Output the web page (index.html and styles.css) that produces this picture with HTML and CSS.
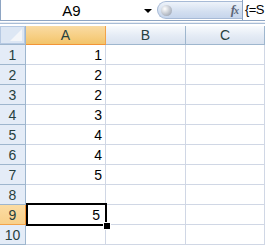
FILE: index.html
```html
<!DOCTYPE html>
<html lang="en">
<head>
    <meta charset="UTF-8">
    <title>Sheet</title>
    <link rel="stylesheet" href="styles.css">
</head>
<body>
    <div class="formula-bar">
        <div class="name-box">
            <span class="name">A9</span>
            <span class="drop"></span>
        </div>
        <div class="pill">
            <span class="knob"></span>
            <span class="fx">f<i>x</i></span>
        </div>
        <div class="formula">{=S</div>
    </div>
    <div class="bar-gap"></div>

    <div class="sheet">
        <div class="corner"><span class="tri"></span></div>
        <div class="col-head active">A</div>
        <div class="col-head">B</div>
        <div class="col-head">C</div>

        <div class="row-head">1</div><div class="cell">1</div><div class="cell"></div><div class="cell"></div>
        <div class="row-head">2</div><div class="cell">2</div><div class="cell"></div><div class="cell"></div>
        <div class="row-head">3</div><div class="cell">2</div><div class="cell"></div><div class="cell"></div>
        <div class="row-head">4</div><div class="cell">3</div><div class="cell"></div><div class="cell"></div>
        <div class="row-head">5</div><div class="cell">4</div><div class="cell"></div><div class="cell"></div>
        <div class="row-head">6</div><div class="cell">4</div><div class="cell"></div><div class="cell"></div>
        <div class="row-head">7</div><div class="cell">5</div><div class="cell"></div><div class="cell"></div>
        <div class="row-head">8</div><div class="cell"></div><div class="cell"></div><div class="cell"></div>
        <div class="row-head active">9</div><div class="cell selected">5<span class="sel"><span class="handle"></span></span></div><div class="cell"></div><div class="cell"></div>
        <div class="row-head">10</div><div class="cell"></div><div class="cell"></div><div class="cell"></div>
    </div>
</body>
</html>
```

FILE: styles.css
```css
body, html {
    margin: 0;
    padding: 0;
    background: #ffffff;
    font-family: "Liberation Sans", Arial, sans-serif;
    font-size: 14px;
    overflow: hidden;
}

/* formula bar */
.formula-bar {
    display: flex;
    height: 20px;
    border-bottom: 1px solid #8ea5c3;
    background: #ffffff;
}

.name-box {
    width: 157px;
    box-sizing: border-box;
    border-left: 1px solid #8ea5c3;
    display: flex;
    align-items: center;
    position: relative;
}

.name {
    flex: 1;
    text-align: center;
    color: #000;
    padding-right: 2px;
    padding-top: 1px;
    font-size: 15px;
}

.drop {
    width: 0;
    height: 0;
    border-left: 4px solid transparent;
    border-right: 4px solid transparent;
    border-top: 4px solid #000;
    margin-right: 5px;
    margin-top: 1px;
}

.pill {
    width: 85px;
    margin-top: 1px;
    height: 18px;
    box-sizing: border-box;
    border: 1px solid #a7bad6;
    border-right: none;
    border-radius: 9px 0 0 9px;
    background: linear-gradient(#eef3fa, #d3dff0 60%, #c6d5ec);
    display: flex;
    align-items: center;
    justify-content: space-between;
}

.knob {
    width: 11px;
    height: 11px;
    margin-left: 3px;
    border-radius: 50%;
    background: radial-gradient(circle at 35% 35%, #ffffff, #b8bec8 60%, #8e96a4);
}

.fx {
    font-family: "Liberation Serif", "Times New Roman", serif;
    font-style: italic;
    font-weight: bold;
    color: #5c6678;
    font-size: 13px;
    margin-right: 4px;
    letter-spacing: -1px;
}

.fx i {
    font-size: 10px;
}

.formula {
    flex: 1;
    border-left: 1px solid #8ea5c3;
    padding-left: 2px;
    padding-top: 2px;
    white-space: nowrap;
    overflow: hidden;
    color: #000;
    font-size: 13px;
    letter-spacing: -0.6px;
}

.bar-gap {
    height: 1px;
    margin-top: 1px;
    border-bottom: 1px solid #a9bdd6;
    background: #e8edf4;
    margin-bottom: 2px;
}

/* grid */
.sheet {
    display: grid;
    grid-template-columns: 26px 80px 80px 79px;
    grid-template-rows: 19px repeat(10, 20px);
}

.sheet > div {
    box-sizing: border-box;
}

.corner {
    background: #dde7f4;
    border-right: 1px solid #9eb6ce;
    border-bottom: 1px solid #9eb6ce;
    position: relative;
    box-shadow: inset 0 0 0 1px #b6c9e2;
}

.tri {
    position: absolute;
    right: 3px;
    bottom: 3px;
    width: 0;
    height: 0;
    border-left: 12px solid transparent;
    border-bottom: 12px solid #f4f6f9;
}

.col-head {
    background: linear-gradient(#f8fafd, #e4ebf5 55%, #d9e2ef);
    border-right: 1px solid #9eb6ce;
    border-bottom: 1px solid #9eb6ce;
    text-align: center;
    line-height: 19px;
    color: #27413e;
}

.col-head.active {
    background: linear-gradient(#f9dba4, #f7cf84 55%, #f2c46a);
    border-right: 1px solid #f2a34a;
    border-bottom: 1px solid #f29436;
}

.row-head {
    background: #e4ecf7;
    border-right: 1px solid #9eb6ce;
    border-bottom: 1px solid #9eb6ce;
    text-align: center;
    line-height: 20px;
    color: #27413e;
}

.row-head.active {
    background: linear-gradient(#fbdca3, #f8d08a);
    border-right: 1px solid #f29436;
    border-bottom: 1px solid #f2a34a;
}

.cell {
    border-right: 1px solid #d0d7e5;
    border-bottom: 1px solid #d0d7e5;
    text-align: right;
    padding-right: 3px;
    line-height: 20px;
    color: #000;
}

.selected {
    position: relative;
    padding-right: 5px;
}

.sel {
    position: absolute;
    left: 0;
    top: -2px;
    width: 81px;
    height: 23px;
    box-sizing: border-box;
    border: 2px solid #000;
}

.handle {
    position: absolute;
    right: -5px;
    bottom: -5px;
    width: 6px;
    height: 6px;
    background: #000;
    border: 1px solid #fff;
    box-sizing: content-box;
    margin: -1px;
}
```
